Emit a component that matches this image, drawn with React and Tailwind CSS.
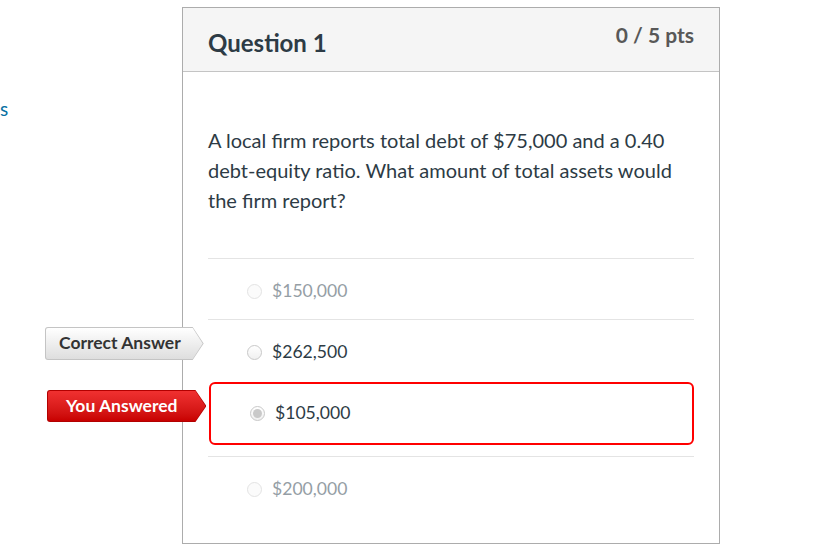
import React from 'react';

const Radio = ({ checked, faded }) => (
  <span
    className={`w-[15px] h-[15px] rounded-full border flex items-center justify-center shrink-0 ${
      faded ? 'border-[#e3e3e3] bg-[#fbfbfb]' : 'border-[#c8c8c8] bg-gradient-to-b from-white to-[#f0f0f0]'
    }`}
  >
    {checked && <span className="w-[9px] h-[9px] rounded-full bg-[#c9c9c9]" />}
  </span>
);

const Tag = ({ children, red }) => (
  <div
    className={`p-[1px] rounded-l-[3px] ${red ? 'bg-[#b30000]' : 'bg-[#c4c4c4]'}`}
    style={{ clipPath: 'polygon(0 0, calc(100% - 11px) 0, 100% 50%, calc(100% - 11px) 100%, 0 100%)' }}
  >
    <div
      className={`rounded-l-[2px] font-bold text-[17.5px] flex items-center ${
        red
          ? 'h-[30px] pl-[18px] pr-[28px] bg-gradient-to-b from-[#f03030] to-[#c80000] text-white'
          : 'h-[31px] pl-[13px] pr-[22px] bg-gradient-to-b from-white to-[#dedede] text-[#333]'
      }`}
      style={{ clipPath: 'polygon(0 0, calc(100% - 10px) 0, 100% 50%, calc(100% - 10px) 100%, 0 100%)' }}
    >
      {children}
    </div>
  </div>
);

const answers = [
  { text: '$150,000', faded: true },
  { text: '$262,500', correct: true },
  { text: '$105,000', picked: true },
  { text: '$200,000', faded: true },
];

export default function App() {
  return (
    <div className="min-h-screen bg-white flex font-['Lato','Open_Sans',sans-serif]">
      {/* clipped sidebar link */}
      <div className="w-[182px] pt-[99px] text-[19px] text-[#0770a3] leading-none">
        <span>s</span>
      </div>

      <div className="mt-[7px] w-[538px] h-[537px] border border-[#acacac] flex flex-col">
        <div className="h-[64px] bg-[#f5f5f5] border-b border-[#c4c4c4] flex justify-between px-[25px]">
          <h2 className="pt-[20px] text-[24px] font-bold text-[#2d3b45] leading-tight">Question 1</h2>
          <div className="pt-[14px] text-[21px] font-bold text-[#585858] leading-tight">0 / 5 pts</div>
        </div>

        <div className="px-[25px] pt-[53px]">
          <p className="text-[20px] leading-[30px] text-[#2d3b45] pr-[10px]">
            A local firm reports total debt of $75,000 and a 0.40 debt-equity ratio. What amount of total
            assets would the firm report?
          </p>

          <div className="mt-[43px]">
            {answers.map((a, i) =>
              a.picked ? (
                <div key={i} className="relative h-[76px] pt-[2px]">
                  <div className="absolute left-[-161px] top-[10px]">
                    <Tag red>You Answered</Tag>
                  </div>
                  <div className="ml-[1px] h-[63px] border-2 border-[#ff0000] rounded-[6px] flex items-center pl-[39px] gap-[10px] text-[17.6px] text-[#2d3b45]">
                    <Radio checked />
                    <span>{a.text}</span>
                  </div>
                </div>
              ) : (
                <div
                  key={i}
                  className={`relative h-[61px] pt-[4px] flex items-center pl-[39px] gap-[10px] text-[17.6px] ${
                    i === 2 ? '' : 'border-t border-[#e4e4e4]'
                  } ${a.faded ? 'text-[#959ea5]' : 'text-[#2d3b45]'}`}
                >
                  {a.correct && (
                    <div className="absolute left-[-163px] top-[7px]">
                      <Tag>Correct Answer</Tag>
                    </div>
                  )}
                  <Radio faded={a.faded} />
                  <span>{a.text}</span>
                </div>
              )
            )}
          </div>
        </div>
      </div>
    </div>
  );
}
